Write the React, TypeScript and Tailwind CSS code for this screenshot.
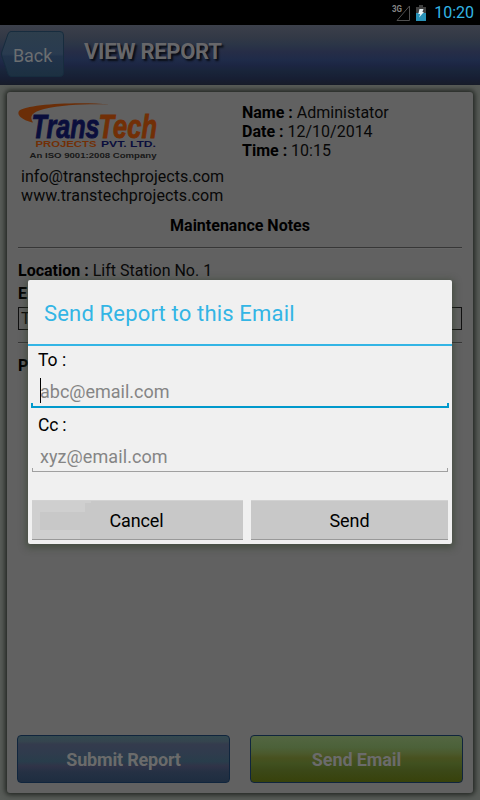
import { useState } from "react";

function StatusBar() {
  return (
    <div className="flex h-[25px] items-center justify-end bg-black pr-[6px]">
      <svg width="19" height="18" viewBox="0 0 19 18" className="mr-[5px]">
        <text x="0" y="8" fontSize="9" fontWeight="700" fill="#858585" textLength="10" lengthAdjust="spacingAndGlyphs">
          3G
        </text>
        <path d="M5 16.5H17.5V2Z" fill="none" stroke="#505050" />
      </svg>
      <svg width="10" height="16" viewBox="0 0 10 16" className="mr-[8px]">
        <path d="M3 0H7V2H10V16H0V2H3Z" fill="#404040" />
        <path d="M0 8H10V16H0Z" fill="#2992b8" />
        <path d="M3.5 4H7.5L6.4 7H8L3 12.5L4.3 9H2.3Z" fill="#e8f4f8" />
      </svg>
      <span className="mt-px text-[16px] leading-none text-[#33b5e5]">10:20</span>
    </div>
  );
}

function Header() {
  return (
    <div className="flex h-[60px] items-start bg-[linear-gradient(#3c404b_0%,#333946_20%,#2b3547_33%,#262d47_45%,#1f2b49_58%,#1c2542_68%,#19253a_76%,#171f34_88%,#171c29_100%)]">
      <div className="relative mt-[6px] ml-[1px] h-[46px] w-[63px]">
        <svg width="63" height="46" viewBox="0 0 63 46" className="absolute inset-0">
          <defs>
            <linearGradient id="back" x1="0" y1="0" x2="0" y2="1">
              <stop offset="0" stopColor="#2d3e4c" />
              <stop offset="0.5" stopColor="#293b50" />
              <stop offset="0.55" stopColor="#21334b" />
              <stop offset="1" stopColor="#1c3041" />
            </linearGradient>
          </defs>
          <path d="M10 .5H59Q62.500 .5 62.500 4V42Q62.500 45.500 59 45.500H10Q8 45.500 7 43L.8 25Q.2 23 .8 21L7 3Q8 .5 10 .5Z" fill="url(#back)" stroke="#172c3e" />
        </svg>
        <span className="absolute top-[12px] left-[12px] text-[18px] leading-[26px] tracking-[-0.1px] text-[#6b6e70]">Back</span>
      </div>
      <h1 className="mt-[14px] ml-[20px] text-[22px] leading-[26px] font-bold tracking-[-0.3px] text-[#67676a] [text-shadow:2px_2px_2px_#090c14]">
        VIEW REPORT
      </h1>
    </div>
  );
}

function Logo() {
  return (
    <svg width="146" height="58" viewBox="0 0 146 58" className="block overflow-visible">
      <path d="M92 1.500C57-1.500 8 1.500 1 8C-2 13 7 18 15 19.500C11 13 14 9 26 6C44 2 68 .8 92 1.500Z" fill="#6b2e08" />
      <g fontFamily="Liberation Sans" fontWeight="700" fontStyle="italic" fontSize="34">
        <text x="13.500" y="35.300" fill="#0a0e3c" stroke="#0a0e3c" strokeWidth="0.9" textLength="68" lengthAdjust="spacingAndGlyphs">
          Trans
        </text>
        <text x="80.500" y="35.300" fill="#722f06" stroke="#722f06" strokeWidth="0.9" textLength="58.500" lengthAdjust="spacingAndGlyphs">
          Tech
        </text>
      </g>
      <g fontFamily="Liberation Sans" fontWeight="700" fontSize="8.500">
        <text x="17.500" y="43.700" fill="#722f06" textLength="61" lengthAdjust="spacingAndGlyphs">
          PROJECTS
        </text>
        <text x="83" y="43.700" fill="#0a0e3c" textLength="55" lengthAdjust="spacingAndGlyphs">
          PVT. LTD.
        </text>
        <text x="11.500" y="54.700" fontSize="7.500" fill="#171717" textLength="127" lengthAdjust="spacingAndGlyphs">
          An ISO 9001:2008 Company
        </text>
      </g>
    </svg>
  );
}

const details = [
  { label: "Name", value: "Administator" },
  { label: "Date", value: "12/10/2014" },
  { label: "Time", value: "10:15" },
];

function Report() {
  return (
    <div className="mx-[7px] mt-[7px] flex h-[701px] flex-col rounded-[3px] bg-[#616161] px-[11px] text-[16px] leading-[19px] text-[#080808] shadow-[0_0_5px_2px_#222622]">
      <div className="flex h-[113px] pt-[11px]">
        <div className="w-[224px]">
          <Logo />
          <div className="mt-[6px] ml-[3px]">
            <p className="tracking-[0.04px]">info@transtechprojects.com</p>
            <p className="tracking-[0.11px]">www.transtechprojects.com</p>
          </div>
        </div>
        <div>
          {details.map((item) => (
            <p key={item.label}>
              <b className="text-black">{item.label} :</b> {item.value}
            </p>
          ))}
        </div>
      </div>
      <h2 className="mt-[11px] text-center font-bold text-black">Maintenance Notes</h2>
      <div className="mt-[12px] h-[2px] border-t border-b border-t-[#373737] border-b-[#666]" />
      <p className="mt-[12px]">
        <b className="text-black">Location :</b> Lift Station No. 1
      </p>
      <p className="mt-[4px] font-bold text-black">E</p>
      <div className="mt-[4px] h-[23px] border border-[#111] pl-[2px] leading-[21px]">T</div>
      <div className="mt-[12px] h-[2px] border-t border-b border-t-[#373737] border-b-[#666]" />
      <p className="mt-[12px] font-bold text-black">P</p>
      <div className="mt-auto -mx-px mb-[10px] flex justify-between text-[18px] font-bold text-[#6b6b6b] [text-shadow:2px_2px_2px_#0b1116]">
        <button className="h-[48px] w-[213px] rounded-[4px] border border-[#10253d] bg-[linear-gradient(#334950_0%,#35444e_12%,#343b4d_18%,#303b4d_35%,#293d4b_55%,#303448_65%,#253144_78%,#1e2d40_100%)] tracking-[-0.2px]">
          Submit Report
        </button>
        <button className="h-[48px] w-[213px] rounded-[4px] border border-[#10253d] bg-[linear-gradient(#536642_0%,#4c6139_25%,#4b592c_38%,#48511f_48%,#40501f_60%,#3b4818_75%,#38420b_100%)] tracking-[-0.1px]">
          Send Email
        </button>
      </div>
    </div>
  );
}

function EmailDialog() {
  const [to, setTo] = useState("");
  const [cc, setCc] = useState("");

  return (
    <div className="absolute top-[280px] left-[28px] flex h-[264px] w-[424px] flex-col rounded-[2px] bg-[#f0f0f0] text-[18px] text-black shadow-[0_2px_7px_2px_rgba(44,60,36,0.5)]">
      <h2 className="h-[66px] shrink-0 border-b-2 border-[#33b5e5] pl-[16px] text-[22px] leading-[67px] tracking-[0.17px] text-[#33b5e5]">
        Send Report to this Email
      </h2>
      <label className="mt-[3px] ml-[10px] h-[22px] text-[17.500px] leading-[22px]">To :</label>
      <div className="relative mx-[3px] mt-[5px] h-[32px] border-b-2 border-[#0099cc]">
        <input
          value={to}
          onChange={(e) => setTo(e.target.value)}
          placeholder="abc@email.com"
          className="block h-[30px] w-full bg-transparent pl-[9px] outline-none placeholder:text-[#858585]"
        />
        <i className="absolute top-[2px] left-[9px] h-[25px] w-px bg-black" />
        <i className="absolute bottom-0 left-0 h-[3px] w-[2px] bg-[#0099cc]" />
        <i className="absolute right-0 bottom-0 h-[3px] w-[2px] bg-[#0099cc]" />
      </div>
      <label className="mt-[6px] ml-[10px] h-[22px] text-[17.500px] leading-[22px] tracking-[-0.2px]">Cc :</label>
      <div className="relative mx-[4px] mt-[5px] h-[31px] border-b border-[#a0a0a0]">
        <input
          value={cc}
          onChange={(e) => setCc(e.target.value)}
          placeholder="xyz@email.com"
          className="block h-[31px] w-full bg-transparent pl-[8px] tracking-[0.08px] outline-none placeholder:text-[#858585]"
        />
        <i className="absolute bottom-0 left-0 h-[3px] w-px bg-[#a0a0a0]" />
        <i className="absolute right-0 bottom-0 h-[3px] w-px bg-[#a0a0a0]" />
      </div>
      <div className="mx-[4px] mt-[28px] flex justify-between">
        <button className="relative h-[40px] w-[211px] border-t border-b border-t-[#d2d2d2] border-b-[#999] bg-[#c8c8c8]">
          <svg width="60" height="38" viewBox="0 0 60 38" className="absolute top-0 left-0">
            <path d="M0 0H59V2H53V11H8V29H48V38H0Z" fill="#cfcfcf" />
          </svg>
          <span className="relative -left-px tracking-[-0.1px]">Cancel</span>
        </button>
        <button className="h-[40px] w-[197px] border-t border-b border-t-[#d2d2d2] border-b-[#999] bg-[#c8c8c8] tracking-[-0.1px]">Send</button>
      </div>
    </div>
  );
}

export default function App() {
  return (
    <div className="relative h-[800px] w-[480px] overflow-hidden bg-[#575b57] font-[Roboto,sans-serif]">
      <StatusBar />
      <Header />
      <Report />
      <EmailDialog />
    </div>
  );
}
